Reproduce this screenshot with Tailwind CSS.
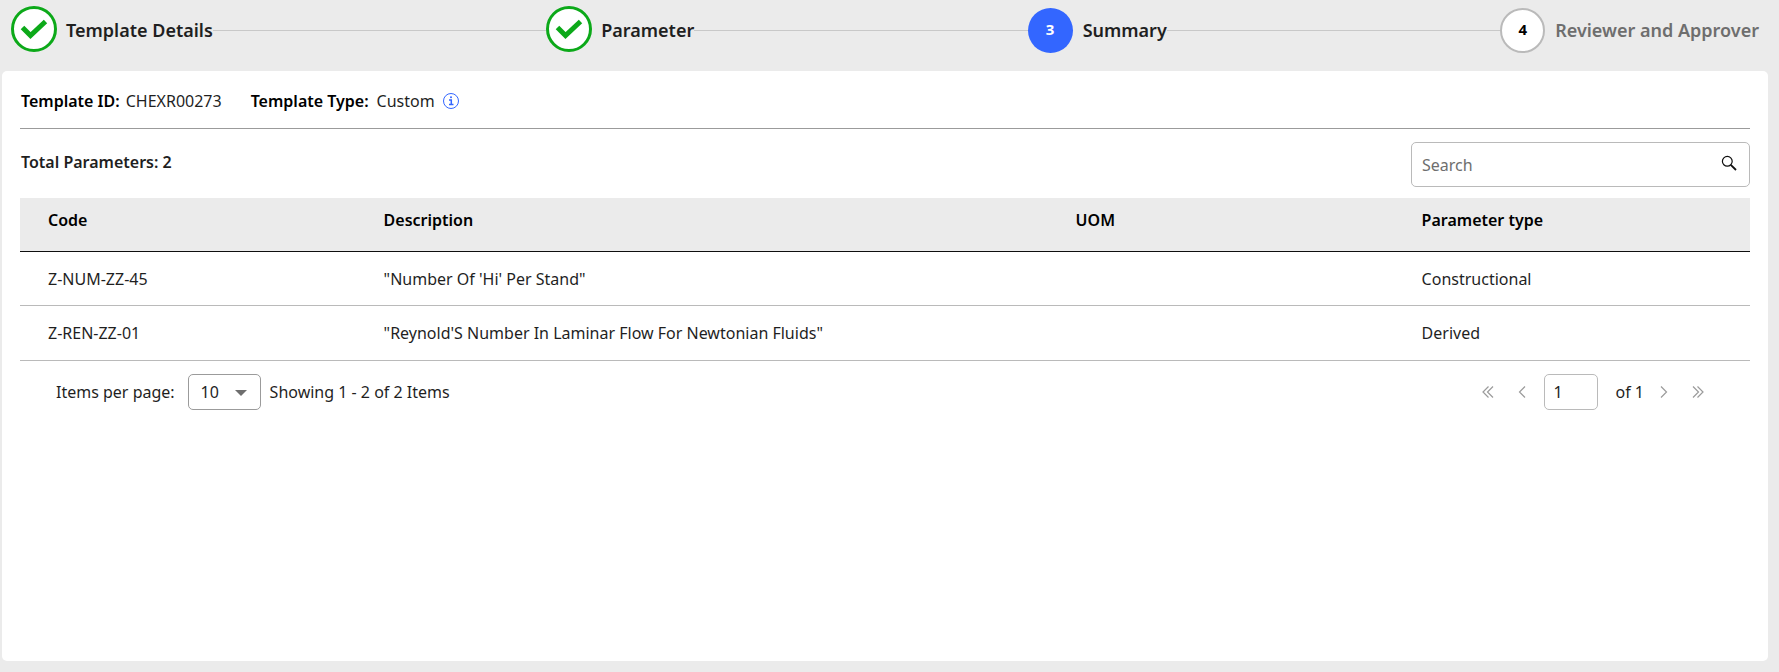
<!DOCTYPE html>
<html lang="en">
<head>
    <meta charset="UTF-8">
    <meta name="viewport" content="width=device-width, initial-scale=1.0">
    <title>Template Summary</title>
    <script src="https://cdn.jsdelivr.net/npm/@tailwindcss/browser@4"></script>
</head>
<body class="bg-[#ebebeb] font-['Noto_Sans',sans-serif] text-[#1f1f1f] text-base min-h-screen flex flex-col">
    <!-- Stepper -->
    <header class="pl-[11px] pr-5 h-[71px] pt-1.5">
        <ol class="flex items-center text-lg font-semibold whitespace-nowrap">
            <li class="flex items-center">
                <svg class="w-[46px] h-[46px] mr-[9px] mb-0.5" viewBox="0 0 46 46" fill="none">
                    <circle cx="23" cy="23" r="21.5" fill="#fff" stroke="#0ca919" stroke-width="3" />
                    <path d="M11.5 21.5l8 8L34.5 15.500" stroke="#0ca919" stroke-width="5" />
                </svg>
                Template Details
            </li>
            <li class="flex-1 h-px bg-[#c8c8c8]" aria-hidden="true"></li>
            <li class="flex items-center">
                <svg class="w-[46px] h-[46px] mr-[9px] mb-0.5" viewBox="0 0 46 46" fill="none">
                    <circle cx="23" cy="23" r="21.5" fill="#fff" stroke="#0ca919" stroke-width="3" />
                    <path d="M11.5 21.5l8 8L34.5 15.500" stroke="#0ca919" stroke-width="5" />
                </svg>
                Parameter
            </li>
            <li class="flex-1 h-px bg-[#c8c8c8]" aria-hidden="true"></li>
            <li class="flex items-center" aria-current="step">
                <span class="w-[45px] h-[45px] mr-[10px] rounded-full bg-[#3366ff] text-white text-[15px] font-bold flex items-center justify-center">3</span>
                Summary
            </li>
            <li class="flex-1 h-px bg-[#c8c8c8]" aria-hidden="true"></li>
            <li class="flex items-center text-[#6e6e6e]">
                <span class="w-[45px] h-[45px] mr-[10px] rounded-full bg-white border-2 border-[#bababa] text-black text-[15px] font-bold flex items-center justify-center">4</span>
                Reviewer and Approver
            </li>
        </ol>
    </header>

    <main class="flex-1 bg-white rounded-[5px] ml-0.5 mr-[11px] mb-[11px] px-[18px]">
        <div class="flex items-center h-[57px] pt-0.5 pl-px">
            <span class="font-semibold text-black mr-1.5">Template ID:</span>
            <span>CHEXR00273</span>
            <span class="font-semibold text-black ml-[29px] mr-2">Template Type:</span>
            <span>Custom</span>
            <svg class="w-4 h-4 ml-2" viewBox="0 0 16 16" fill="none" stroke="#3366ff">
                <circle cx="8" cy="8" r="7.5" />
                <path d="M6 7h2.300v4.500M6 11.500h4.500" stroke-width="1.500" />
                <circle cx="8" cy="4.200" r="1" fill="#3366ff" stroke="none" />
            </svg>
        </div>
        <hr class="border-[#9b9b9b]">

        <div class="flex justify-between pt-[13px] pb-[11px] pl-px">
            <h2 class="font-semibold pt-2">Total Parameters: 2</h2>
            <label class="flex items-center w-[339px] h-[45px] border border-[#bababa] rounded-[5px] pl-2.5 pr-3">
                <input type="text" placeholder="Search" aria-label="Search" class="flex-1 min-w-0 outline-none placeholder:text-[#6e6e6e]">
                <svg class="w-4 h-4 -mt-1" viewBox="0 0 16 16" fill="none" stroke="#0f0f0f">
                    <circle cx="6.300" cy="6.300" r="4.900" stroke-width="1.200" />
                    <path d="M9.800 9.800L15 15" stroke-width="1.800" />
                </svg>
            </label>
        </div>

        <table class="w-full table-fixed border-separate border-spacing-0 text-left">
            <thead>
                <tr class="h-[54px] bg-[#ebebeb] text-black align-top">
                    <th class="w-[19.4%] pl-7 pt-2.5 font-semibold border-b border-[#0f0f0f]">Code</th>
                    <th class="w-[40%] pl-7 pt-2.5 font-semibold border-b border-[#0f0f0f]">Description</th>
                    <th class="w-[20%] pl-7 pt-2.5 font-semibold border-b border-[#0f0f0f]">UOM</th>
                    <th class="pl-7 pt-2.5 font-semibold border-b border-[#0f0f0f]">Parameter type</th>
                </tr>
            </thead>
            <tbody>
                <tr class="h-[54px]">
                    <td class="pl-7 border-b border-[#bababa]">Z-NUM-ZZ-45</td>
                    <td class="pl-7 border-b border-[#bababa]">"Number Of 'Hi' Per Stand"</td>
                    <td class="pl-7 border-b border-[#bababa]"></td>
                    <td class="pl-7 border-b border-[#bababa]">Constructional</td>
                </tr>
                <tr class="h-[55px]">
                    <td class="pl-7 border-b border-[#bababa]">Z-REN-ZZ-01</td>
                    <td class="pl-7 border-b border-[#bababa]">"Reynold'S Number In Laminar Flow For Newtonian Fluids"</td>
                    <td class="pl-7 border-b border-[#bababa]"></td>
                    <td class="pl-7 border-b border-[#bababa]">Derived</td>
                </tr>
            </tbody>
        </table>

        <!-- Pagination -->
        <div class="flex items-center justify-between pt-[13px] pl-9 pr-[46px]">
            <div class="flex items-center">
                <label for="page-size">Items per page:</label>
                <div class="relative ml-[13px] mr-[9px]">
                    <select id="page-size" class="appearance-none w-[73px] h-9 border border-[#9b9b9b] rounded-[5px] pl-3 bg-white">
                        <option>10</option>
                        <option>20</option>
                        <option>50</option>
                    </select>
                    <svg class="absolute right-3.5 top-4 w-3 h-1.5 pointer-events-none" viewBox="0 0 12 6" fill="#6e6e6e"><path d="M0 0h12L6 6z" /></svg>
                </div>
                <span>Showing 1 - 2 of 2 Items</span>
            </div>
            <div class="flex items-center">
                <button aria-label="First page" class="mr-6">
                    <svg class="w-3 h-3" viewBox="0 0 12 12" fill="none" stroke="#9b9b9b" stroke-width="1.200"><path d="M6.500 .5L1 6l5.500 5.500M11 .5L5.500 6l5.500 5.500" /></svg>
                </button>
                <button aria-label="Previous page" class="mr-[18px]">
                    <svg class="w-2 h-3" viewBox="0 0 8 12" fill="none" stroke="#9b9b9b" stroke-width="1.200"><path d="M7 .5L1.500 6 7 11.500" /></svg>
                </button>
                <input type="text" value="1" aria-label="Page" class="w-[54px] h-9 border border-[#bababa] rounded-[5px] pl-[9px] outline-none">
                <span class="ml-[18px] mr-4">of 1</span>
                <button aria-label="Next page" class="mr-6">
                    <svg class="w-2 h-3" viewBox="0 0 8 12" fill="none" stroke="#9b9b9b" stroke-width="1.200"><path d="M1 .5L6.500 6 1 11.500" /></svg>
                </button>
                <button aria-label="Last page">
                    <svg class="w-3 h-3" viewBox="0 0 12 12" fill="none" stroke="#9b9b9b" stroke-width="1.200"><path d="M1 .5L6.500 6 1 11.500M5.500 .5L11 6l-5.500 5.500" /></svg>
                </button>
            </div>
        </div>
    </main>
</body>
</html>
